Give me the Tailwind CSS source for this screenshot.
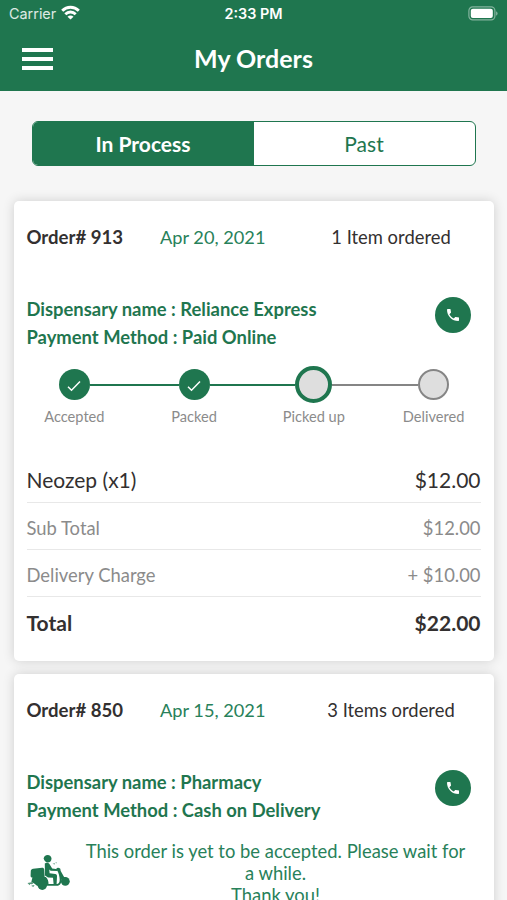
<!DOCTYPE html>
<html lang="en">
<head>
    <meta charset="UTF-8">
    <meta name="viewport" content="width=device-width, initial-scale=1.0">
    <title>My Orders</title>
    <script src="https://cdn.jsdelivr.net/npm/@tailwindcss/browser@4"></script>
</head>
<body class="bg-[#f6f6f6] h-[900px] overflow-hidden font-['Lato',sans-serif] text-[#333030]">
    <header class="h-[91px] bg-[#1f764f] text-white">
        <!-- Status bar -->
        <div class="h-7 px-[9px] grid grid-cols-3 items-center font-['Inter',sans-serif] text-[14.4px]">
            <div class="flex items-center gap-[5px] text-white/85">
                <span>Carrier</span>
                <svg class="w-[19px] h-[15px] -mt-[2px]" viewBox="0 0 19 15" fill="none" stroke="#fff" stroke-width="2.9">
                    <path d="M1.2 5.800C5.900 1 13.100 1 17.800 5.800"/>
                    <path d="M4.300 9.200C7.300 6.300 11.700 6.300 14.700 9.200"/>
                    <path d="M9.500 14.600 6.500 11.700C8.300 10.100 10.700 10.100 12.500 11.700Z" fill="#fff" stroke="none"/>
                </svg>
            </div>
            <div class="text-center font-semibold">2:33 PM</div>
            <svg class="w-[31px] h-[15px] justify-self-end -mt-[2px]" viewBox="0 0 31 15">
                <rect x="1.900" y=".9" width="26" height="13" rx="3.800" fill="none" stroke="#fff" stroke-opacity=".45" stroke-width="1.2"/>
                <rect x="3.800" y="2.800" width="22" height="9.200" rx="2" fill="#fff"/>
                <path d="M29.200 5.200C31 5.900 31 9 29.200 9.700Z" fill="#fff" fill-opacity=".5"/>
            </svg>
        </div>
        <div class="h-[62px] px-[22px] grid grid-cols-[60px_1fr_60px] items-center">
            <button class="w-[31px] flex flex-col gap-[5px]">
                <span class="h-[4px] bg-white"></span>
                <span class="h-[4px] bg-white"></span>
                <span class="h-[4px] bg-white"></span>
            </button>
            <h1 class="text-center text-[25px] font-bold">My Orders</h1>
        </div>
    </header>

    <main class="px-[13.5px]">
        <div class="mt-[30px] mx-[18px] h-[45px] flex rounded-[6px] border-[1.5px] border-[#1f764f] bg-white overflow-hidden text-[21px] text-center leading-[43px]">
            <button class="flex-1 bg-[#1f764f] text-white font-bold">In Process</button>
            <button class="flex-1 text-[#1f764f]">Past</button>
        </div>

        <!-- Order 913 -->
        <section class="mt-[34.5px] h-[460px] px-[13px] bg-white rounded-[5px] shadow-[0_0_12px_rgba(0,0,0,0.16)]">
            <div class="h-[74px] flex items-center text-[18.4px] whitespace-nowrap">
                <span class="shrink-0 w-[97px] text-[18.600px] font-bold">Order# 913</span>
                <span class="shrink-0 ml-[36.5px] w-[105px] text-[18.200px] text-[#28815a]">Apr 20, 2021</span>
                <span class="ml-[37px] w-[178px] text-center">1 Item ordered</span>
            </div>
            <div class="mt-[20px] h-[57px] flex items-start justify-between text-[#1f764f] text-[18.4px] font-bold leading-[28.5px]">
                <div>
                    <p>Dispensary name : Reliance Express</p>
                    <p>Payment Method : Paid Online</p>
                </div>
                <button class="mt-[2px] mr-[9.5px] size-[36.5px] rounded-full bg-[#1f764f] flex items-center justify-center">
                    <svg class="size-[16px]" viewBox="0 0 24 24" fill="#fff"><path d="M20 15.500c-1.200 0-2.500-.2-3.600-.6-.4-.1-.8 0-1 .2l-2.200 2.200c-2.800-1.500-5.200-3.800-6.600-6.600l2.200-2.200c.3-.3.4-.7.2-1C8.700 6.400 8.500 5.200 8.500 4c0-.6-.4-1-1-1H4c-.5 0-1 .5-1 1 0 9.400 7.600 17 17 17 .6 0 1-.5 1-1v-3.500c0-.5-.4-1-1-1z"/></svg>
                </button>
            </div>

            <!-- Progress steps -->
            <div class="mt-[14px] ml-[-12px] mr-[-13px] grid grid-cols-4 text-center text-[14.600px] text-[#8b8b8b]">
                <div>
                    <div class="h-[38px] flex items-center">
                        <span class="flex-1"></span>
                        <span class="size-[31px] rounded-full bg-[#1f764f] flex items-center justify-center">
                            <svg class="size-[14px] mt-[2px]" viewBox="0 0 14 14" fill="none" stroke="#fff" stroke-width="1.5"><path d="M1 7.800 4.500 11.300 13 2.500"/></svg>
                        </span>
                        <span class="flex-1 h-[2px] bg-[#1f764f]"></span>
                    </div>
                    <p class="mt-[2px]">Accepted</p>
                </div>
                <div>
                    <div class="h-[38px] flex items-center">
                        <span class="flex-1 h-[2px] bg-[#1f764f]"></span>
                        <span class="size-[31px] rounded-full bg-[#1f764f] flex items-center justify-center">
                            <svg class="size-[14px] mt-[2px]" viewBox="0 0 14 14" fill="none" stroke="#fff" stroke-width="1.5"><path d="M1 7.800 4.500 11.300 13 2.500"/></svg>
                        </span>
                        <span class="flex-1 h-[2px] bg-[#1f764f]"></span>
                    </div>
                    <p class="mt-[2px]">Packed</p>
                </div>
                <div>
                    <div class="h-[38px] flex items-center">
                        <span class="flex-1 h-[2px] bg-[#1f764f]"></span>
                        <span class="size-[37px] rounded-full border-4 border-[#1f764f] bg-[#dedede]"></span>
                        <span class="flex-1 h-[2px] bg-[#858585]"></span>
                    </div>
                    <p class="mt-[2px]">Picked up</p>
                </div>
                <div>
                    <div class="h-[38px] flex items-center">
                        <span class="flex-1 h-[2px] bg-[#858585]"></span>
                        <span class="size-[31px] rounded-full border-2 border-[#858585] bg-[#dedede]"></span>
                        <span class="flex-1"></span>
                    </div>
                    <p class="mt-[2px]">Delivered</p>
                </div>
            </div>

            <!-- Price breakdown -->
            <div class="mt-[29px] text-[18.4px] text-[#8b8b8b]">
                <div class="h-[47px] border-b border-[#e8e8e8] flex items-center justify-between text-[21px] text-[#333030]">
                    <span>Neozep (x1)</span><span>$12.00</span>
                </div>
                <div class="h-[47px] pt-[5px] border-b border-[#e8e8e8] flex items-center justify-between">
                    <span>Sub Total</span><span>$12.00</span>
                </div>
                <div class="h-[47px] pt-[5px] border-b border-[#e8e8e8] flex items-center justify-between">
                    <span>Delivery Charge</span><span>+ $10.00</span>
                </div>
                <div class="h-[51px] flex items-center justify-between text-[21px] font-bold text-[#333030]">
                    <span>Total</span><span>$22.00</span>
                </div>
            </div>
        </section>

        <!-- Order 850 -->
        <section class="mt-[13px] h-[460px] px-[13px] bg-white rounded-[5px] shadow-[0_0_12px_rgba(0,0,0,0.16)]">
            <div class="h-[74px] flex items-center text-[18.4px] whitespace-nowrap">
                <span class="shrink-0 w-[97px] text-[18.600px] font-bold">Order# 850</span>
                <span class="shrink-0 ml-[36.5px] w-[105px] text-[18.200px] text-[#28815a]">Apr 15, 2021</span>
                <span class="ml-[37px] w-[178px] text-center">3 Items ordered</span>
            </div>
            <div class="mt-[20px] h-[57px] flex items-start justify-between text-[#1f764f] text-[18.4px] font-bold leading-[28.5px]">
                <div>
                    <p>Dispensary name : Pharmacy</p>
                    <p>Payment Method : Cash on Delivery</p>
                </div>
                <button class="mt-[2px] mr-[9.5px] size-[36.5px] rounded-full bg-[#1f764f] flex items-center justify-center">
                    <svg class="size-[16px]" viewBox="0 0 24 24" fill="#fff"><path d="M20 15.500c-1.200 0-2.500-.2-3.600-.6-.4-.1-.8 0-1 .2l-2.200 2.200c-2.800-1.500-5.200-3.800-6.600-6.600l2.200-2.200c.3-.3.4-.7.2-1C8.700 6.400 8.500 5.200 8.500 4c0-.6-.4-1-1-1H4c-.5 0-1 .5-1 1 0 9.400 7.600 17 17 17 .6 0 1-.5 1-1v-3.500c0-.5-.4-1-1-1z"/></svg>
                </button>
            </div>
            <div class="mt-[15px] flex items-start text-[#28815a]">
                <!-- Delivery scooter -->
                <svg class="mt-[15px] w-[44px] h-[36px] shrink-0" viewBox="0 0 44 36" fill="#1f764f">
                    <!-- rider -->
                    <path d="M16.700 3.600C16.900 1.300 18.500 0 20.600 0c2.200 0 3.900 1.500 3.900 3.700 0 2.100-1.600 3.800-3.600 3.800-2.200 0-3.800-1.500-4.200-3.900Z"/>
                    <path d="M17.800 8.500c1.600-1.300 4.200-.8 5.100 1.200l2.300 3.800 5.600.8-.2 1.800-7-.4-1.300-1.200.3 3.800 5.600.7c1.300.3 1.900 1.100 1.800 2.400L29.600 29h-3l-.6-6.300-5-.2-3-2Z"/>
                    <!-- box -->
                    <path d="M3.800 15.800c.3-1.200 1-1.900 2.300-2.100l9-1c1.300 0 2 .6 2.100 1.800l.5 8H5.500c-1.400 0-2-.8-1.900-2.100Z"/>
                    <!-- body -->
                    <path d="M5.500 22h13.300c2.100 2 2.800 4.300 2.700 6.900h8.200c2.100 0 3-1.700 3-4.200 0-3-.9-6.500-2.600-9.500l-.8-1.500c.6-1.400 2.800-1.400 4 .1l.4 2.200 3.400 6c3.300.6 5.100 2.700 5.300 5.600l-3.900-2.200-4-1c.1 3.600-1.500 6.300-4.500 6.300H10l-3.400-2.700-2.300-.7Z"/>
                    <circle cx="15.300" cy="30.300" r="4.700"/>
                    <circle cx="38.300" cy="26.300" r="4.400"/>
                    <path d="m.5 28 4-.7 2 1.200-2 .8-1.300-.4-.5 1.400-1-1ZM4.500 30.500l3-.4-.8 1.700-1.700-.3ZM25.500 8.800l2.500-.6-.3 1.300ZM28.500 7.300l1.400.2-.8.900Z" fill-opacity=".75"/>
                </svg>
                <p class="ml-[12.5px] w-[385px] text-center text-[18.4px] leading-[22px]">This order is yet to be accepted. Please wait for a while.<br>Thank you!</p>
            </div>
        </section>
    </main>
</body>
</html>
